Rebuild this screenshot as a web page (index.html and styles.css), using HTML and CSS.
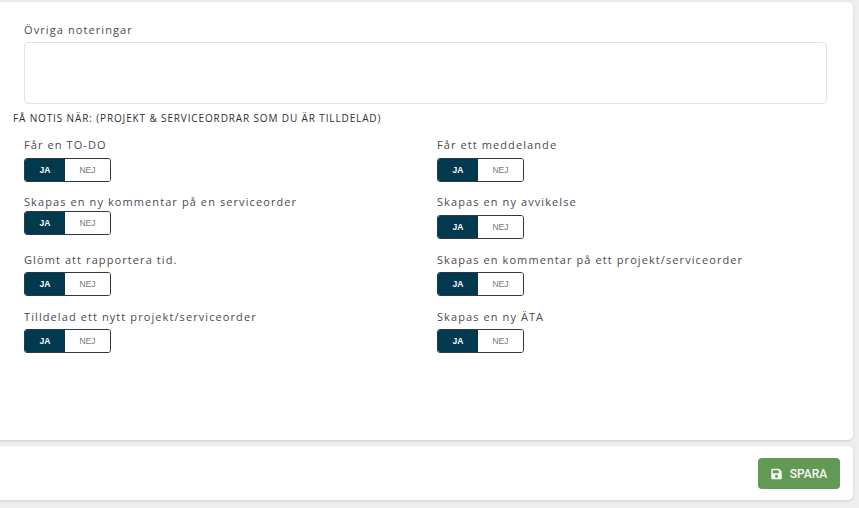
FILE: index.html
```html
<!DOCTYPE html>
<html lang="sv">
<head>
  <meta charset="UTF-8" />
  <meta name="viewport" content="width=device-width, initial-scale=1.0" />
  <title>Notiser</title>
  <link rel="stylesheet" href="styles.css">
</head>
<body>
<div class="page">
  <div class="card card-form">
    <div class="notes">
      <label class="label" for="notes">Övriga noteringar</label>
      <textarea id="notes" class="notes-input"></textarea>
    </div>
    <h5 class="section-title">FÅ NOTIS NÄR: (PROJEKT &amp; SERVICEORDRAR SOM DU ÄR TILLDELAD)</h5>
    <div class="columns">
      <div class="column">
        <div class="field">
          <div class="label">Får en TO-DO</div>
          <div class="toggle"><span class="toggle-yes">JA</span><span class="toggle-no">NEJ</span></div>
        </div>
        <div class="field field-tight">
          <div class="label">Skapas en ny kommentar på en serviceorder</div>
          <div class="toggle"><span class="toggle-yes">JA</span><span class="toggle-no">NEJ</span></div>
        </div>
        <div class="field field-low">
          <div class="label">Glömt att rapportera tid.</div>
          <div class="toggle"><span class="toggle-yes">JA</span><span class="toggle-no">NEJ</span></div>
        </div>
        <div class="field field-low">
          <div class="label">Tilldelad ett nytt projekt/serviceorder</div>
          <div class="toggle"><span class="toggle-yes">JA</span><span class="toggle-no">NEJ</span></div>
        </div>
      </div>
      <div class="column">
        <div class="field">
          <div class="label">Får ett meddelande</div>
          <div class="toggle"><span class="toggle-yes">JA</span><span class="toggle-no">NEJ</span></div>
        </div>
        <div class="field">
          <div class="label">Skapas en ny avvikelse</div>
          <div class="toggle"><span class="toggle-yes">JA</span><span class="toggle-no">NEJ</span></div>
        </div>
        <div class="field field-low">
          <div class="label">Skapas en kommentar på ett projekt/serviceorder</div>
          <div class="toggle"><span class="toggle-yes">JA</span><span class="toggle-no">NEJ</span></div>
        </div>
        <div class="field field-low">
          <div class="label">Skapas en ny ÄTA</div>
          <div class="toggle"><span class="toggle-yes">JA</span><span class="toggle-no">NEJ</span></div>
        </div>
      </div>
    </div>
  </div>
  <div class="card card-actions">
    <button class="save-btn">
      <svg class="save-icon" viewBox="0 0 448 512"><path fill="currentColor" d="M433.941 129.941l-83.882-83.882A48 48 0 0 0 316.118 32H48C21.49 32 0 53.49 0 80v352c0 26.51 21.49 48 48 48h352c26.51 0 48-21.49 48-48V163.882a48 48 0 0 0-14.059-33.941zM224 416c-35.346 0-64-28.654-64-64 0-35.346 28.654-64 64-64s64 28.654 64 64c0 35.346-28.654 64-64 64zm96-304.52V212c0 6.627-5.373 12-12 12H76c-6.627 0-12-5.373-12-12V108c0-6.627 5.373-12 12-12h228.52c3.183 0 6.235 1.264 8.485 3.515l3.48 3.48A11.996 11.996 0 0 1 320 111.48z"/></svg>
      SPARA
    </button>
  </div>
</div>
</body>
</html>
```

FILE: styles.css
```css
* { box-sizing: border-box; margin: 0; padding: 0; }
html, body { width: 100%; height: 100%; overflow: hidden; }
body {
  background: #eeeeee;
  font-family: "Open Sans", sans-serif;
  color: #3f3f46;
}
.page {
  padding: 2px 6px 0 0;
  margin-left: -6px;
  display: flex;
  flex-direction: column;
  gap: 6px;
}
.card {
  background: #fff;
  border-radius: 5px;
  box-shadow: 0 1px 3px rgba(0,0,0,.14);
}
.card-form {
  height: 438px;
  padding: 20px 26px 0 19px;
}
.card-actions {
  height: 54px;
  padding: 12px 13px;
  display: flex;
  justify-content: flex-end;
}
.notes { padding-left: 11px; }
.label {
  display: block;
  font-size: 11px;
  line-height: 16px;
  letter-spacing: 1.09px;
  color: #4a4a52;
}
.notes-input {
  display: block;
  width: 100%;
  height: 62px;
  margin-top: 4px;
  border: 1px solid #e2e2e2;
  border-radius: 4px;
  background: #fff;
  resize: none;
}
.section-title {
  font-size: 10px;
  line-height: 14px;
  font-weight: 500;
  letter-spacing: .87px;
  color: #2d2d33;
  margin-top: 7px;
}
.columns {
  display: grid;
  grid-template-columns: 413px 1fr;
  padding-left: 11px;
  margin-top: 12px;
}
.field { height: 57px; }
.field .label { margin-bottom: 5px; }
.field-tight .label { margin-bottom: 1px; }
.field-low { padding-top: 1px; }
.field-low .label { margin-bottom: 4px; }
.toggle {
  display: flex;
  width: 87px;
  height: 24px;
  border: 1px solid #2b3a42;
  border-radius: 3px;
  overflow: hidden;
  font-family: "Liberation Sans", sans-serif;
  font-size: 8.5px;
  line-height: 23px;
  text-align: center;
}
.toggle-yes {
  width: 40px;
  background: #03394f;
  color: #fff;
  font-weight: 700;
}
.toggle-no {
  flex: 1;
  background: #fff;
  color: #777;
}
.save-btn {
  display: flex;
  align-items: center;
  justify-content: center;
  gap: 8px;
  width: 82px;
  height: 31px;
  border: none;
  border-radius: 4px;
  background: #629a55;
  color: #f4f8f3;
  font-family: Roboto, sans-serif;
  font-size: 12px;
  font-weight: 500;
}
.save-icon { width: 11px; height: 12px; }
```
